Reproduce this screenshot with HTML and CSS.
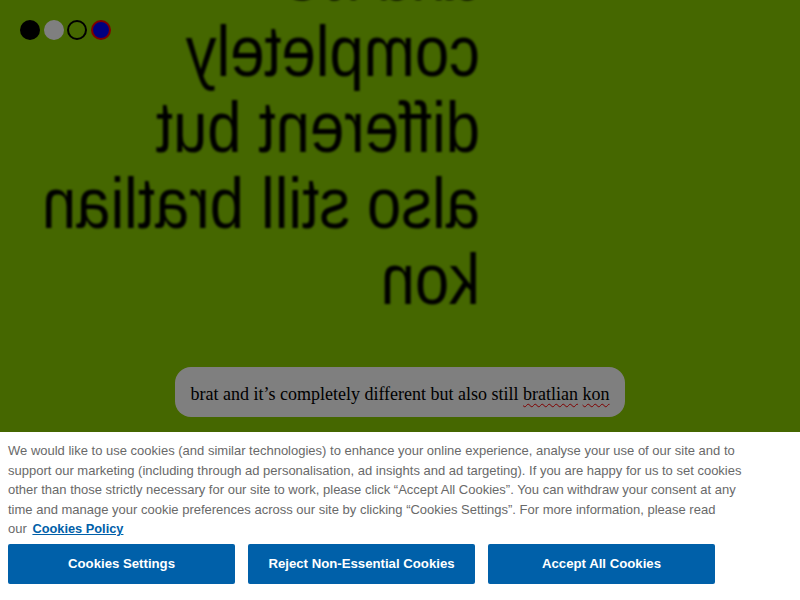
FILE: index.html
```html
<!DOCTYPE html>
<html lang="en">
<head>
<meta charset="utf-8">
<title>brat generator</title>
<link rel="stylesheet" href="styles.css">
</head>
<body>
<main class="stage">
  <div class="swatches">
    <button class="swatch swatch-black" aria-label="black"></button>
    <button class="swatch swatch-white" aria-label="white"></button>
    <button class="swatch swatch-outline" aria-label="green"></button>
    <button class="swatch swatch-blue" aria-label="blue"></button>
  </div>
  <div class="brat-text">
    <div class="line">brat</div>
    <div class="line">and it’s</div>
    <div class="line">completely</div>
    <div class="line">different but</div>
    <div class="line">also still bratlian</div>
    <div class="line">kon</div>
  </div>
  <div class="entry"><span class="entry-text">brat and it’s completely different but also still <span class="misspelt">bratlian</span> <span class="misspelt">kon</span></span></div>
</main>
<div class="dim"></div>
<section class="cookie-banner">
  <p class="cookie-text">We would like to use cookies (and similar technologies) to enhance your online experience, analyse your use of our site and to support our marketing (including through ad personalisation, ad insights and ad targeting). If you are happy for us to set cookies other than those strictly necessary for our site to work, please click “Accept All Cookies”. You can withdraw your consent at any time and manage your cookie preferences across our site by clicking “Cookies Settings”. For more information, please read <span class="nowrap">our <a class="policy-link" href="#">Cookies Policy</a></span></p>
  <div class="cookie-actions">
    <button class="cookie-btn">Cookies Settings</button>
    <button class="cookie-btn">Reject Non-Essential Cookies</button>
    <button class="cookie-btn">Accept All Cookies</button>
  </div>
</section>
</body>
</html>
```
FILE: styles.css
```css
html, body {
  margin: 0;
  padding: 0;
}
body {
  background: #8ace00;
  width: 800px;
  height: 600px;
  overflow: hidden;
}
.stage {
  position: relative;
  height: 432px;
  display: flex;
  flex-direction: column;
  overflow: hidden;
}
.swatches {
  position: absolute;
  top: 20px;
  left: 20px;
  display: flex;
  gap: 3.5px;
}
.swatch {
  width: 20px;
  height: 20px;
  border-radius: 50%;
  padding: 0;
  margin: 0;
  border: none;
  box-sizing: border-box;
}
.swatch-black { background: #000; }
.swatch-white { background: #fff; }
.swatch-outline { background: transparent; border: 2px solid #000; }
.swatch-blue { background: #0000ff; border: 2px solid #ff0000; }

.brat-text {
  flex: none;
  margin: -139px 0 0 480px;
  width: 540px;
  font-family: "Liberation Sans", Arial, sans-serif;
  font-size: 72px;
  line-height: 76px;
  color: #000;
  text-align: left;
  white-space: nowrap;
  transform-origin: 0 0;
  transform: scaleX(-0.855);
  filter: blur(1.1px);
}
.entry {
  flex: none;
  margin: auto auto 15px;
  width: 450px;
  height: 50px;
  box-sizing: border-box;
  padding-top: 5px;
  border-radius: 16px;
  background: #fff;
  display: flex;
  align-items: center;
  justify-content: center;
  font-family: "Liberation Serif", "Times New Roman", serif;
  font-size: 18px;
  color: #000;
  white-space: nowrap;
}
.misspelt {
  text-decoration: underline wavy #ff0000;
  text-decoration-thickness: 1px;
  text-underline-offset: 3px;
}
.dim {
  position: fixed;
  inset: 0;
  background: rgba(0, 0, 0, 0.5);
}
.cookie-banner {
  position: fixed;
  left: 0;
  right: 0;
  bottom: 0;
  height: 168px;
  box-sizing: border-box;
  background: #fff;
  padding: 9px 8px 0;
  font-family: "Liberation Sans", Arial, sans-serif;
}
.cookie-text {
  margin: 0;
  width: 745px;
  font-size: 13px;
  line-height: 19.5px;
  color: #696969;
}
.nowrap { white-space: nowrap; }
.policy-link {
  margin-left: 2px;
  font-size: 12.8px;
  font-weight: bold;
  color: #0060a9;
  text-decoration: underline;
}
.cookie-actions {
  display: flex;
  gap: 13px;
  margin-top: 5px;
}
.cookie-btn {
  width: 227px;
  height: 40px;
  border: none;
  border-radius: 2px;
  background: #0060a9;
  color: #fff;
  font-family: "Liberation Sans", Arial, sans-serif;
  font-size: 13.2px;
  font-weight: bold;
  padding: 0;
}
```
